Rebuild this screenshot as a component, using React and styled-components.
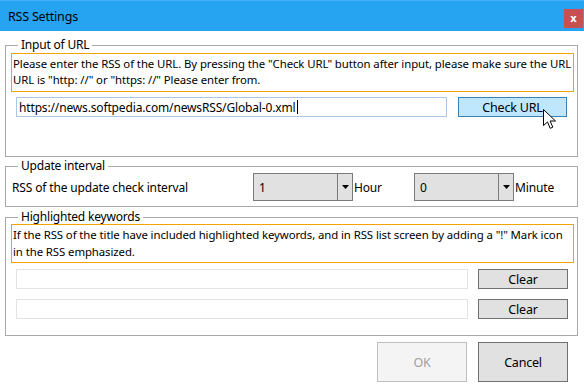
import React from 'react'
import styled, { createGlobalStyle } from 'styled-components'

const Global = createGlobalStyle`
  html, body {
    margin: 0;
    padding: 0;
    background: #ffffff;
  }
  body {
    font-family: "Noto Sans", "Open Sans", sans-serif;
    font-size: 12px;
    color: #000;
  }
  * {
    box-sizing: border-box;
  }
`

const Window = styled.div`
  position: relative;
  width: 584px;
  height: 392px;
  background: #fff;
  display: flex;
  flex-direction: column;
  overflow: hidden;
`

const TitleBar = styled.div`
  height: 31px;
  flex: none;
  background: #27a4f1;
  border-top: 1px solid #45b1f4;
  display: flex;
  align-items: center;
  justify-content: space-between;
  padding-left: 8px;
  padding-right: 1px;
`

const Title = styled.span`
  font-size: 12.5px;
  letter-spacing: -0.2px;
  color: #000;
`

const CloseButton = styled.div`
  width: 19px;
  height: 19px;
  margin-top: 4px;
  background: #c75050;
  color: #fff;
  font-family: "DejaVu Sans", sans-serif;
  font-weight: bold;
  font-size: 10px;
  display: flex;
  align-items: center;
  justify-content: center;
`

const Body = styled.div`
  display: flex;
  flex-direction: column;
  padding: 6px 6px 0 5px;
`

const Group = styled.fieldset`
  margin: ${p => p.$top || 0}px 0 0 0;
  padding: 0 3px ${p => p.$bottom || 0}px 5px;
  border: 1px solid #a9a9a9;
  min-width: 0;
`

const Legend = styled.legend`
  margin-left: 7px;
  padding: 0 3px;
  line-height: ${p => p.$lh || 14}px;
  font-size: 12px;
  letter-spacing: -0.2px;
  color: #000;
`

const Note = styled.div`
  border: 1px solid #f5a300;
  padding: ${p => p.$pad || '2px 0 3px 1px'};
  line-height: ${p => p.$lh || 16}px;
  font-size: 11.4px;
  letter-spacing: -0.09px;
  white-space: nowrap;
  color: #000;
`

const Row = styled.div`
  display: flex;
  align-items: center;
  margin-top: ${p => p.$top || 0}px;
  padding-left: ${p => p.$left || 0}px;
`

const TextBox = styled.div`
  width: ${p => p.$w}px;
  height: ${p => p.$h || 20}px;
  border: 1px solid ${p => (p.$focus ? '#a9c6e6' : '#e3e3e3')};
  background: #fff;
  display: flex;
  align-items: center;
  padding-left: 2px;
  font-size: 12px;
  letter-spacing: -0.15px;
  color: #000;
`

const Caret = styled.span`
  display: inline-block;
  width: 1px;
  height: 14px;
  background: #000;
  margin-left: 1px;
`

const Button = styled.div`
  width: ${p => p.$w}px;
  height: ${p => p.$h}px;
  margin-left: ${p => p.$ml || 0}px;
  display: flex;
  align-items: center;
  justify-content: center;
  font-size: 12.5px;
  letter-spacing: -0.2px;
  border: 1px solid ${p => (p.$hover ? '#3c7fb1' : p.$disabled ? '#bfbfbf' : '#707070')};
  background: ${p => (p.$hover ? '#bee6fd' : p.$disabled ? '#f4f4f4' : '#e1e1e1')};
  color: ${p => (p.$disabled ? '#a0a0a0' : '#000')};
`

const Label = styled.span`
  font-size: 12px;
  letter-spacing: -0.15px;
  width: ${p => (p.$w ? `${p.$w}px` : 'auto')};
  margin-left: ${p => p.$ml || 0}px;
  flex: none;
`

const Combo = styled.div`
  width: 100px;
  height: 28px;
  border: 1px solid #7a7a7a;
  background: #e1e1e1;
  display: flex;
  align-items: stretch;
  flex: none;
`

const ComboValue = styled.div`
  flex: 1;
  display: flex;
  align-items: center;
  padding-left: 5px;
  font-size: 12px;
`

const ComboArrow = styled.div`
  width: 15px;
  border-left: 1px solid #7a7a7a;
  display: flex;
  align-items: center;
  justify-content: center;
`

const Footer = styled.div`
  display: flex;
  justify-content: flex-end;
  gap: 11px;
  padding: 6px 10px 0 0;
`

const Pointer = styled.svg`
  position: absolute;
  left: 543px;
  top: 109px;
`

const Arrow = () => (
  <svg width="7" height="4" viewBox="0 0 7 4">
    <path d="M0 0h7L3.5 4z" fill="#000" />
  </svg>
)

const Select = ({ value }) => (
  <Combo>
    <ComboValue>{value}</ComboValue>
    <ComboArrow>
      <Arrow />
    </ComboArrow>
  </Combo>
)

export default function App() {
  return (
    <Window>
      <Global />
      <TitleBar>
        <Title>RSS Settings</Title>
        <CloseButton>x</CloseButton>
      </TitleBar>
      <Body>
        <Group $bottom={39}>
          <Legend $lh={16}>Input of URL</Legend>
          <Note>
            Please enter the RSS of the URL. By pressing the "Check URL" button after input, please make sure the URL
            <br />
            URL is "http: //" or "https: //" Please enter from.
          </Note>
          <Row $top={5} $left={5}>
            <TextBox $w={431} $focus>
              https://news.softpedia.com/newsRSS/Global-0.xml
              <Caret />
            </TextBox>
            <Button $w={109} $h={20} $ml={11} $hover>
              Check URL
            </Button>
          </Row>
        </Group>
        <Group $top={2} $bottom={5}>
          <Legend>Update interval</Legend>
          <Row>
            <Label $w={241} $ml={1}>RSS of the update check interval</Label>
            <Select value="1" />
            <Label $w={60} $ml={1}>Hour</Label>
            <Select value="0" />
            <Label $ml={1}>Minute</Label>
          </Row>
        </Group>
        <Group $top={3} $bottom={16}>
          <Legend>Highlighted keywords</Legend>
          <Note $pad="2px 0 2px 1px" $lh={16.5}>
            If the RSS of the title have included highlighted keywords, and in RSS list screen by adding a "!" Mark icon
            <br />
            in the RSS emphasized.
          </Note>
          <Row $top={6} $left={5}>
            <TextBox $w={452} $h={20} />
            <Button $w={90} $h={20} $ml={10}>
              Clear
            </Button>
          </Row>
          <Row $top={10} $left={5}>
            <TextBox $w={452} $h={20} />
            <Button $w={90} $h={20} $ml={10}>
              Clear
            </Button>
          </Row>
        </Group>
        <Footer>
          <Button $w={90} $h={40} $disabled>
            OK
          </Button>
          <Button $w={90} $h={40}>
            Cancel
          </Button>
        </Footer>
      </Body>
      <Pointer width="13" height="21" viewBox="0 0 13 21">
        <path
          d="M0.5 0.5v16l4-3.5 2.7 6.3 2.6-1.1-2.7-6.2h5.4z"
          fill="#fff"
          stroke="#000"
          strokeWidth="1"
          strokeLinejoin="miter"
        />
      </Pointer>
    </Window>
  )
}
